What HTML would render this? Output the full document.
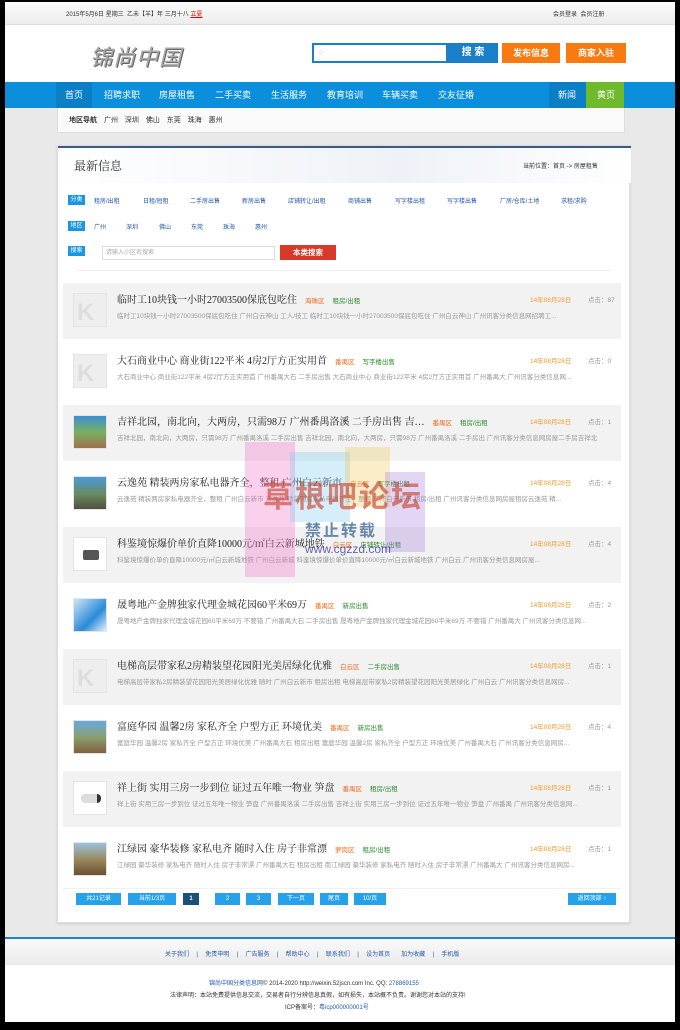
<!DOCTYPE html>
<html><head><meta charset="utf-8"><style>
*{margin:0;padding:0;box-sizing:border-box}
body{width:680px;height:1030px;background:#000;font-family:"Liberation Sans","Noto Sans CJK SC",sans-serif;position:relative;overflow:hidden;font-size:7px;color:#333}
.a{position:absolute;white-space:nowrap}
#pg{position:absolute;left:5px;top:2px;width:670px;height:1020px;background:#e9e9e9;overflow:hidden}
.top{position:absolute;left:0;top:0;width:670px;height:23px;background:linear-gradient(#fafafa,#ececec);border-bottom:1px solid #ddd}
.hd{position:absolute;left:0;top:23px;width:670px;height:57px;background:#fff}
.nav{position:absolute;left:0;top:80px;width:670px;height:26px;background:#0b8fdc}
.nav span{position:absolute;top:0;line-height:26px;color:#fff;font-size:9px}
.panel{position:absolute;left:52px;top:143px;width:573px;height:778px;background:#fff;border:1px solid #ddd;box-shadow:0 1px 2px #ccc}
.it{position:absolute;left:5px;width:558px;height:56px}
.g{background:#f2f2f2}
.th{position:absolute;left:10px;top:10px;width:34px;height:34px;background:#eee;border:1px solid #e4e4e4}
.tt{position:absolute;left:54px;top:8px;font-size:10px;color:#222;font-family:"Liberation Serif","Noto Serif CJK SC",serif;white-space:nowrap}
.tt i{font-style:normal;font-size:6.5px;margin-left:8px;font-family:"Liberation Sans","Noto Sans CJK SC",sans-serif}
.ds{position:absolute;left:54px;top:27px;font-size:6.5px;color:#999;white-space:nowrap;width:484px;overflow:hidden}
.dt{position:absolute;left:467px;top:11px;font-size:6.5px;color:#f39a2c}
.ck{position:absolute;left:525px;top:11px;font-size:6.5px;color:#999}
.pb{position:absolute;top:747px;height:12px;background:#25a2ea;color:#fff;font-size:6px;line-height:12px;text-align:center}
.lb{position:absolute;left:10px;width:17px;height:10px;background:#1a96e0;color:#fff;font-size:6px;line-height:10px;text-align:center}
.cl{position:absolute;font-size:6px;color:#2457a8}
</style></head><body>
<div id="pg">
<div class="top"></div>
<div class="a" style="left:61px;top:7px;font-size:6px;color:#333">2015年5月6日 星期三 &nbsp;乙未【羊】年 三月十八 <span style="color:#d00;text-decoration:underline">立夏</span></div>
<div class="a" style="left:548px;top:7px;font-size:6px;color:#333">会员登录 &nbsp;会员注册</div>
<div class="hd"></div>
<div class="a" style="left:85px;top:38px;font-size:22px;color:#aaa;font-style:italic;letter-spacing:1px;text-shadow:1px 1px 0 #666">锦尚中国</div>
<div class="a" style="left:307px;top:41px;width:136px;height:20px;border:2px solid #1a7fc9;background:#fff"></div>
<div class="a" style="left:313px;top:45px;font-size:9px;color:#ccc">○</div>
<div class="a" style="left:443px;top:41px;width:50px;height:20px;background:#1a7fc9;color:#fff;font-size:10px;line-height:20px;text-align:center;font-weight:bold">搜 索</div>
<div class="a" style="left:497px;top:41px;width:58px;height:20px;background:#fa7a12;color:#fff;font-size:9px;line-height:20px;text-align:center;font-weight:bold">发布信息</div>
<div class="a" style="left:561px;top:41px;width:60px;height:20px;background:#fa7a12;color:#fff;font-size:9px;line-height:20px;text-align:center;font-weight:bold">商家入驻</div>
<div class="nav">
<div class="a" style="left:51px;top:0;width:36px;height:26px;background:#0a7fc6"></div>
<span style="left:60px">首页</span><span style="left:99px">招聘求职</span><span style="left:154px">房屋租售</span><span style="left:210px">二手买卖</span><span style="left:266px">生活服务</span><span style="left:322px">教育培训</span><span style="left:377px">车辆买卖</span><span style="left:433px">交友征婚</span>
<div class="a" style="left:544px;top:0;width:37px;height:26px;background:#0a7fc6"></div><span style="left:553px">新闻</span>
<div class="a" style="left:581px;top:0;width:38px;height:26px;background:#6fba2c"></div><span style="left:592px">黄页</span>
</div>
<div class="a" style="left:52px;top:106px;width:568px;height:25px;background:#fafafa;border:1px solid #ddd;border-top:none"></div>
<div class="a" style="left:64px;top:113px;font-size:7px;color:#333;word-spacing:5px"><b>地区导航</b> 广州 深圳 佛山 东莞 珠海 惠州</div>

<div class="panel">
<div class="a" style="left:0;top:0;width:573px;height:2px;background:#3a5a8c"></div>
<div class="a" style="left:0;top:2px;width:573px;height:35px;background:linear-gradient(90deg,#fff,#eef2f8 60%,#fff)"></div>
<div class="a" style="left:16px;top:11px;font-size:12px;color:#333;font-family:'Liberation Serif','Noto Serif CJK SC',serif">最新信息</div>
<div class="a" style="left:465px;top:15px;font-size:6px;color:#333">当前位置：首页 -&gt; 房屋租售</div>
<div class="lb" style="top:49px">分类</div>
<div class="cl" style="left:36px;top:50px">租房/出租</div><div class="cl" style="left:85px;top:50px">日租/短租</div><div class="cl" style="left:132px;top:50px">二手房出售</div><div class="cl" style="left:184px;top:50px">新房出售</div><div class="cl" style="left:230px;top:50px">店铺转让/出租</div><div class="cl" style="left:290px;top:50px">商铺出售</div><div class="cl" style="left:337px;top:50px">写字楼出租</div><div class="cl" style="left:389px;top:50px">写字楼出售</div><div class="cl" style="left:442px;top:50px">厂房/仓库/土地</div><div class="cl" style="left:503px;top:50px">求租/求购</div>
<div class="lb" style="top:75px">地区</div>
<div class="cl" style="left:36px;top:76px">广州</div><div class="cl" style="left:68px;top:76px">深圳</div><div class="cl" style="left:101px;top:76px">佛山</div><div class="cl" style="left:133px;top:76px">东莞</div><div class="cl" style="left:165px;top:76px">珠海</div><div class="cl" style="left:197px;top:76px">惠州</div>
<div class="lb" style="top:100px">搜索</div>
<div class="a" style="left:44px;top:100px;width:173px;height:14px;border:1px solid #ddd;font-size:6px;color:#aaa;line-height:12px;padding-left:3px">请输入小区名搜索</div>
<div class="a" style="left:222px;top:99px;width:56px;height:15px;background:#d83a2a;color:#fff;font-size:7.5px;line-height:15px;text-align:center;font-weight:bold">本类搜索</div>
<div class="a" style="left:20px;top:124px;width:533px;height:1px;background:#f0f0f0"></div>

<div class="it g" style="top:137px"><div class="th"><div class="a" style="left:3px;top:5px;font-size:24px;color:#ddd;font-weight:bold">K</div></div><div class="tt">临时工10块钱一小时27003500保底包吃住<i style="color:#f06a20">海珠区</i><i style="color:#2a8a2a">租房/出租</i></div><div class="ds">临时工10块钱一小时27003500保底包吃住 广州白云神山 工人/技工 临时工10块钱一小时27003500保底包吃住 广州白云神山 广州讯客分类信息网招聘工...</div><div class="dt">14年08月28日</div><div class="ck">点击：87</div></div>
<div class="it" style="top:198px"><div class="th"><div class="a" style="left:3px;top:5px;font-size:24px;color:#ddd;font-weight:bold">K</div></div><div class="tt">大石商业中心 商业街122平米 4房2厅方正实用首<i style="color:#f06a20">番禺区</i><i style="color:#2a8a2a">写字楼出售</i></div><div class="ds">大石商业中心 商业街122平米 4房2厅方正实用首 广州番禺大石 二手房出售 大石商业中心 商业街122平米 4房2厅方正实用首 广州番禺大 广州讯客分类信息网...</div><div class="dt">14年08月28日</div><div class="ck">点击：0</div></div>
<div class="it g" style="top:259px"><div class="th" style="background:linear-gradient(#3a8fd0,#7ab060 50%,#a07050)"></div><div class="tt">吉祥北园，南北向，大两房，只需98万 广州番禺洛溪 二手房出售 吉…<i style="color:#f06a20">番禺区</i><i style="color:#2a8a2a">租房/出租</i></div><div class="ds">吉祥北园，南北向，大两房，只需98万 广州番禺洛溪 二手房出售 吉祥北园，南北向，大两房，只需98万 广州番禺洛溪 二手房出 广州讯客分类信息网房屋二手房吉祥北</div><div class="dt">14年08月28日</div><div class="ck">点击：1</div></div>
<div class="it" style="top:320px"><div class="th" style="background:linear-gradient(#4a9ad8,#6a8a60 55%,#505040)"></div><div class="tt">云逸苑 精装两房家私电器齐全，整租 广州白云新市<i style="color:#f06a20">白云区</i><i style="color:#2a8a2a">写字楼出租</i></div><div class="ds">云逸苑 精装两房家私电器齐全，整租 广州白云新市 云逸苑 精装两房家私电器齐全，整租 广州白云新市 租房/出租 广州讯客分类信息网房屋租房云逸苑 精...</div><div class="dt">14年08月28日</div><div class="ck">点击：4</div></div>
<div class="it g" style="top:381px"><div class="th" style="background:#fff"><div class="a" style="left:9px;top:12px;width:16px;height:10px;background:#555;border-radius:2px"></div></div><div class="tt">科鉴境惊爆价单价直降10000元/㎡白云新城地铁<i style="color:#f06a20">白云区</i><i style="color:#2a8a2a">店铺转让/出租</i></div><div class="ds">科鉴境惊爆价单价直降10000元/㎡白云新城地铁 广州白云新城 科鉴境惊爆价单价直降10000元/㎡白云新城地铁 广州白云 广州讯客分类信息网房屋...</div><div class="dt">14年08月28日</div><div class="ck">点击：4</div></div>
<div class="it" style="top:442px"><div class="th" style="background:linear-gradient(135deg,#cfe6f8,#2a8ad8 60%,#e0f0ff)"></div><div class="tt">晟粤地产金牌独家代理金城花园60平米69万<i style="color:#f06a20">番禺区</i><i style="color:#2a8a2a">新房出售</i></div><div class="ds">晟粤地产金牌独家代理金城花园60平米69万 不要错 广州番禺大石 二手房出售 晟粤地产金牌独家代理金城花园60平米69万 不要错 广州番禺大 广州讯客分类信息网...</div><div class="dt">14年08月28日</div><div class="ck">点击：2</div></div>
<div class="it g" style="top:503px"><div class="th"><div class="a" style="left:3px;top:5px;font-size:24px;color:#ddd;font-weight:bold">K</div></div><div class="tt">电梯高层带家私2房精装望花园阳光美居绿化优雅<i style="color:#f06a20">白云区</i><i style="color:#2a8a2a">二手房出售</i></div><div class="ds">电梯高层带家私2房精装望花园阳光美居绿化优雅 随时 广州白云新市 租房出租 电梯高层带家私2房精装望花园阳光美居绿化 广州白云 广州讯客分类信息网房...</div><div class="dt">14年08月28日</div><div class="ck">点击：1</div></div>
<div class="it" style="top:564px"><div class="th" style="background:linear-gradient(#6aa8e0,#8aa070 50%,#806040)"></div><div class="tt">富庭华园 温馨2房 家私齐全 户型方正 环境优美<i style="color:#f06a20">番禺区</i><i style="color:#2a8a2a">新房出售</i></div><div class="ds">富庭华园 温馨2房 家私齐全 户型方正 环境优美 广州番禺大石 租房出租 富庭华园 温馨2房 家私齐全 户型方正 环境优美 广州番禺大石 广州讯客分类信息网房...</div><div class="dt">14年08月28日</div><div class="ck">点击：4</div></div>
<div class="it g" style="top:625px"><div class="th" style="background:#fff"><div class="a" style="left:7px;top:12px;width:20px;height:9px;background:#ddd;border-radius:4px;border-right:4px solid #333"></div></div><div class="tt">祥上街 实用三房一步到位 证过五年唯一物业 笋盘<i style="color:#f06a20">番禺区</i><i style="color:#2a8a2a">租房/出租</i></div><div class="ds">祥上街 实用三房一步到位 证过五年唯一物业 笋盘 广州番禺洛溪 二手房出售 吉祥上街 实用三房一步到位 证过五年唯一物业 笋盘 广州番禺 广州讯客分类信息网...</div><div class="dt">14年08月28日</div><div class="ck">点击：1</div></div>
<div class="it" style="top:686px"><div class="th" style="background:linear-gradient(#9ac0e0,#9a8a60 50%,#6a5030)"></div><div class="tt">江绿园 豪华装修 家私电齐 随时入住 房子非常漂<i style="color:#f06a20">萝岗区</i><i style="color:#2a8a2a">租房/出租</i></div><div class="ds">江绿园 豪华装修 家私电齐 随时入住 房子非常漂 广州番禺大石 租房出租 南江绿园 豪华装修 家私电齐 随时入住 房子非常漂 广州番禺大 广州讯客分类信息网房...</div><div class="dt">14年08月28日</div><div class="ck">点击：1</div></div>
<div class="a" style="left:5px;top:742px;width:558px;height:1px;background:#f0f0f0"></div>

<div class="pb" style="left:18px;width:45px">共21记录</div>
<div class="pb" style="left:70px;width:48px">当前1/3页</div>
<div class="pb" style="left:125px;width:16px;background:#1a4f7a;font-weight:bold">1</div>
<div class="pb" style="left:157px;width:25px">2</div>
<div class="pb" style="left:188px;width:25px">3</div>
<div class="pb" style="left:220px;width:36px">下一页</div>
<div class="pb" style="left:262px;width:28px">尾页</div>
<div class="pb" style="left:296px;width:32px">10/页</div>
<div class="pb" style="left:510px;width:48px">返回顶部 ↑</div>
</div>

<div class="a" style="left:240px;top:440px;width:50px;height:135px;background:rgba(240,120,200,.35)"></div>
<div class="a" style="left:285px;top:450px;width:60px;height:70px;background:rgba(120,200,240,.3)"></div>
<div class="a" style="left:340px;top:445px;width:45px;height:60px;background:rgba(240,200,80,.3)"></div>
<div class="a" style="left:380px;top:470px;width:40px;height:80px;background:rgba(160,120,220,.3)"></div>
<div class="a" style="left:258px;top:470px;font-size:30px;font-weight:bold;color:rgba(200,70,50,.65);letter-spacing:2px">草根吧论坛</div>
<div class="a" style="left:300px;top:515px;font-size:16px;font-weight:bold;color:rgba(40,90,140,.7);letter-spacing:2px">禁止转载</div>
<div class="a" style="left:300px;top:540px;font-size:12px;color:rgba(40,40,140,.7)">www.cgzzd.com</div>

<div class="a" style="left:0;top:935px;width:670px;height:2px;background:#1a86d0"></div>
<div class="a" style="left:0;top:937px;width:670px;height:26px;background:linear-gradient(#fafafa,#eaeaea)"></div>
<div class="a" style="left:0;top:963px;width:670px;height:57px;background:#fff"></div>
<div class="a" style="left:160px;top:947px;font-size:6px;color:#2457a8;word-spacing:2px">关于我们 &nbsp;| &nbsp;免责申明 &nbsp;| &nbsp;广告服务 &nbsp;| &nbsp;帮助中心 &nbsp;| &nbsp;联系我们 &nbsp;| &nbsp;设为首页 &nbsp;&nbsp;加为收藏 &nbsp;| &nbsp;手机版</div>
<div class="a" style="left:204px;top:976px;font-size:6px;color:#333"><span style="color:#2457a8">锦尚中国分类信息网</span>© 2014-2020 http://weixin.52jscn.com Inc. QQ: <span style="color:#2457a8">278869155</span></div>
<div class="a" style="left:165px;top:988px;font-size:6px;color:#333">法律声明：本站免费提供信息交流，交易者自行分辨信息真假，如有损失，本站概不负责。谢谢您对本站的支持!</div>
<div class="a" style="left:280px;top:1000px;font-size:6px;color:#333">ICP备案号：<span style="color:#2457a8">粤icp000000001号</span></div>
</div>
</body></html>
